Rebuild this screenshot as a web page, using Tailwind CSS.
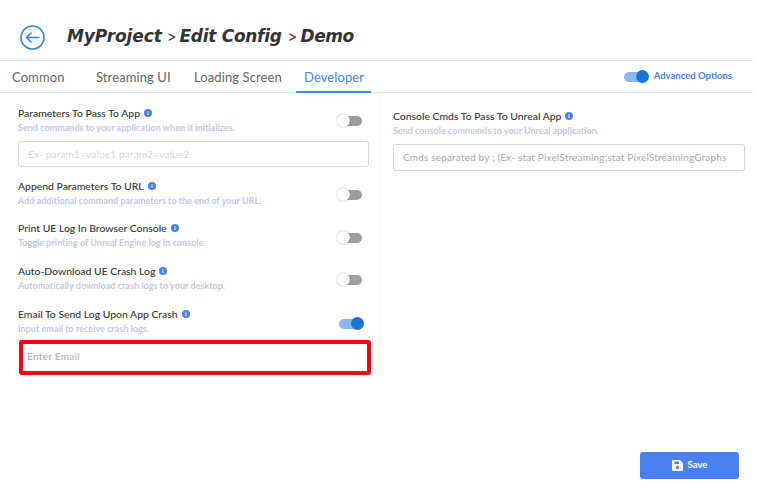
<!DOCTYPE html>
<html>
<head>
<meta charset="utf-8">
<script src="https://cdn.jsdelivr.net/npm/@tailwindcss/browser@4"></script>
</head>
<body class="bg-white">
<div class="w-[766px] h-[491px] overflow-hidden relative flex flex-col font-['Lato',sans-serif] text-[#333]">
  <header class="h-[60px] flex items-center pl-[20px] pt-[14px] w-[753px] shrink-0">
    <svg class="w-[25px] h-[25px] shrink-0" viewBox="0 0 25 25" fill="none" stroke="#2f86e0" stroke-width="1.6" stroke-linecap="round" stroke-linejoin="round"><circle cx="12.5" cy="12.5" r="11.5"/><path d="M19 12.5H6.5M11 8l-4.5 4.5L11 17"/></svg>
    <div class="ml-[22px] flex items-center text-[#333] whitespace-nowrap">
      <span class="font-['DejaVu_Sans',sans-serif] font-bold italic text-[17px] tracking-[-0.1px]">MyProject</span>
      <span class="text-[17px] ml-[5px] mr-[3px]">&gt;</span>
      <span class="font-['DejaVu_Sans',sans-serif] font-bold italic text-[17px] tracking-[-0.3px]">Edit Config</span>
      <span class="text-[17px] ml-[6px] mr-[3px]">&gt;</span>
      <span class="font-['DejaVu_Sans',sans-serif] font-bold italic text-[17px] tracking-[-0.4px]">Demo</span>
    </div>
  </header>
  <nav class="w-[753px] h-[33px] shrink-0 border-y border-[#e6e6e6] flex items-stretch relative text-[13px] tracking-[0.1px] text-[#666] whitespace-nowrap">
    <span class="ml-[12px] w-[84px] leading-[32px]">Common</span>
    <span class="w-[98px] leading-[32px]">Streaming UI</span>
    <span class="w-[102px] leading-[32px]">Loading Screen</span>
    <span class="w-[75px] pl-[8px] leading-[32px] text-[#3f86e6] border-b-2 border-[#3f86e6] h-[32px]">Developer</span>
    <div class="ml-auto flex items-center gap-[5px] pr-[21px]">
      <span class="relative w-[24px] h-[10px] rounded-full bg-[#8ab8ea]"><span class="absolute right-[-1px] top-[-2px] w-[13px] h-[13px] rounded-full bg-[#1976d2]"></span></span>
      <span class="text-[9.500px] font-bold tracking-normal text-[#4a80f0] ml-[1px]">Advanced Options</span>
    </div>
  </nav>
  <main class="flex flex-1 w-[753px]">
    <section class="w-[381px] pl-[18px] pr-[11px] pt-[12px] border-r border-[#f5f5f5] h-[271px]">
      <div class="flex justify-between h-[30px]">
        <div>
          <div class="text-[10.400px] leading-[16px] font-medium flex items-center gap-[4px]">Parameters To Pass To App <svg class="w-[8px] h-[8px]" viewBox="0 0 8 8"><circle cx="4" cy="4" r="4" fill="#4a80f0"/><path d="M4 3.4v2.6M4 2v.8" stroke="#fff" stroke-width="1"/></svg></div>
          <div class="text-[9px] leading-[14px] font-bold tracking-[0.02px] text-[#c3c8de]">Send commands to your application when it initializes.</div>
        </div>
        <div class="relative w-[24px] h-[10px] rounded-full bg-[#9e9e9e] mr-[7px] mt-[11px]"><span class="absolute left-[-1px] top-[-2px] w-[13px] h-[13px] rounded-full bg-white shadow-[0_0_2px_rgba(0,0,0,0.35)]"></span></div>
      </div>
      <div class="mt-[6px] h-[26px] border border-[#d5d5d5] rounded-[3px] pl-[9px] text-[10px] leading-[24px] tracking-[0.2px] text-[#d5d5d5]">Ex- param1=value1 param2=value2</div>
      <div class="flex justify-between h-[30px] mt-[11px]">
        <div>
          <div class="text-[10.400px] leading-[16px] font-medium flex items-center gap-[4px]">Append Parameters To URL <svg class="w-[8px] h-[8px]" viewBox="0 0 8 8"><circle cx="4" cy="4" r="4" fill="#4a80f0"/><path d="M4 3.4v2.6M4 2v.8" stroke="#fff" stroke-width="1"/></svg></div>
          <div class="text-[9px] leading-[14px] font-bold tracking-[0.02px] text-[#c3c8de]">Add additional command parameters to the end of your URL.</div>
        </div>
        <div class="relative w-[24px] h-[10px] rounded-full bg-[#9e9e9e] mr-[7px] mt-[12px]"><span class="absolute left-[-1px] top-[-2px] w-[13px] h-[13px] rounded-full bg-white shadow-[0_0_2px_rgba(0,0,0,0.35)]"></span></div>
      </div>
      <div class="flex justify-between h-[30px] mt-[12px]">
        <div>
          <div class="text-[10.400px] leading-[16px] font-medium flex items-center gap-[4px]">Print UE Log In Browser Console <svg class="w-[8px] h-[8px]" viewBox="0 0 8 8"><circle cx="4" cy="4" r="4" fill="#4a80f0"/><path d="M4 3.4v2.6M4 2v.8" stroke="#fff" stroke-width="1"/></svg></div>
          <div class="text-[9px] leading-[14px] font-bold tracking-[0.02px] text-[#c3c8de]">Toggle printing of Unreal Engine log in console.</div>
        </div>
        <div class="relative w-[24px] h-[10px] rounded-full bg-[#9e9e9e] mr-[7px] mt-[13px]"><span class="absolute left-[-1px] top-[-2px] w-[13px] h-[13px] rounded-full bg-white shadow-[0_0_2px_rgba(0,0,0,0.35)]"></span></div>
      </div>
      <div class="flex justify-between h-[30px] mt-[13px]">
        <div>
          <div class="text-[10.400px] leading-[16px] font-medium flex items-center gap-[4px]">Auto-Download UE Crash Log <svg class="w-[8px] h-[8px]" viewBox="0 0 8 8"><circle cx="4" cy="4" r="4" fill="#4a80f0"/><path d="M4 3.4v2.6M4 2v.8" stroke="#fff" stroke-width="1"/></svg></div>
          <div class="text-[9px] leading-[14px] font-bold tracking-[0.02px] text-[#c3c8de]">Automatically download crash logs to your desktop.</div>
        </div>
        <div class="relative w-[24px] h-[10px] rounded-full bg-[#9e9e9e] mr-[7px] mt-[12px]"><span class="absolute left-[-1px] top-[-2px] w-[13px] h-[13px] rounded-full bg-white shadow-[0_0_2px_rgba(0,0,0,0.35)]"></span></div>
      </div>
      <div class="flex justify-between h-[30px] mt-[13px]">
        <div>
          <div class="text-[10.400px] leading-[16px] font-medium flex items-center gap-[4px]">Email To Send Log Upon App Crash <svg class="w-[8px] h-[8px]" viewBox="0 0 8 8"><circle cx="4" cy="4" r="4" fill="#4a80f0"/><path d="M4 3.4v2.6M4 2v.8" stroke="#fff" stroke-width="1"/></svg></div>
          <div class="text-[9px] leading-[14px] font-bold tracking-[0.02px] text-[#c3c8de]">Input email to receive crash logs.</div>
        </div>
        <div class="relative w-[24px] h-[10px] rounded-full bg-[#8ab8ea] mr-[6px] mt-[13px]"><span class="absolute right-[-1px] top-[-2px] w-[13px] h-[13px] rounded-full bg-[#1976d2]"></span></div>
      </div>
      <div class="mt-[4px] ml-[1px] h-[35px] w-[352px] border-[4px] border-[#f90014] rounded-[3px] pl-[4px] text-[10px] leading-[25px] tracking-[0.3px] text-[#aaa]">Enter Email</div>
    </section>
    <section class="w-[372px] pl-[12px] pt-[15px]">
      <div class="text-[10.400px] leading-[16px] font-medium flex items-center gap-[4px]">Console Cmds To Pass To Unreal App <svg class="w-[8px] h-[8px]" viewBox="0 0 8 8"><circle cx="4" cy="4" r="4" fill="#4a80f0"/><path d="M4 3.4v2.6M4 2v.8" stroke="#fff" stroke-width="1"/></svg></div>
      <div class="text-[9px] leading-[14px] font-bold text-[#c3c8de]">Send console commands to your Unreal application.</div>
      <div class="mt-[6px] h-[27px] w-[352px] border border-[#d5d5d5] rounded-[3px] pl-[9px] text-[10px] leading-[25px] tracking-[0.17px] text-[#aaa] whitespace-nowrap overflow-hidden">Cmds separated by ; (Ex- stat PixelStreaming;stat PixelStreamingGraphs</div>
    </section>
  </main>
  <button class="absolute left-[640px] top-[452px] w-[99px] h-[27px] bg-[#4a80f0] rounded-[3px] flex items-center justify-center gap-[5px] text-white text-[9.5px] font-bold">
    <svg class="w-[11px] h-[11px]" viewBox="0 0 11 11"><path fill="#fff" fill-rule="evenodd" d="M1 0h7l3 3v7a1 1 0 0 1-1 1H1a1 1 0 0 1-1-1V1a1 1 0 0 1 1-1zm1.5 1.5v2.5h4.500V1.500zM5.500 5.800a1.700 1.700 0 1 0 0 3.400 1.700 1.700 0 0 0 0-3.400z"/></svg>
    Save
  </button>
</div>
</body>
</html>
